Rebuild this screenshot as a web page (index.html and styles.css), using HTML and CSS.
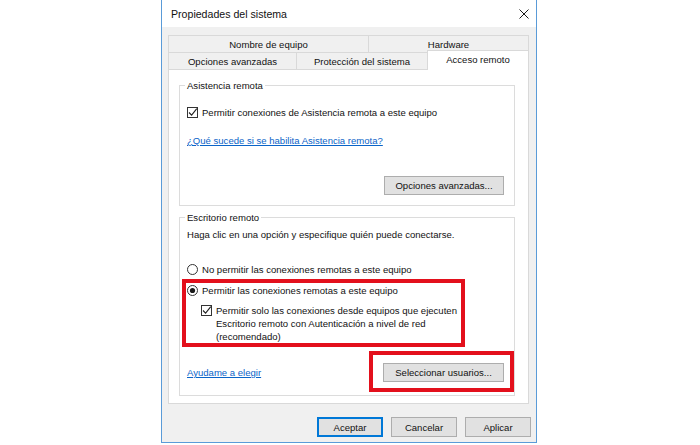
FILE: index.html
```html
<!DOCTYPE html>
<html lang="es">
<head>
<meta charset="utf-8">
<title>Propiedades del sistema</title>
<link rel="stylesheet" href="styles.css">
</head>
<body>
<div class="window">
  <div class="titlebar">
    <span class="title">Propiedades del sistema</span>
    <svg class="close" width="10" height="10" viewBox="0 0 10 10"><path d="M0.5 0.5 L9.5 9.5 M9.5 0.5 L0.5 9.5" stroke="#1a1a1a" stroke-width="1" fill="none"/></svg>
  </div>
  <div class="content">
    <div class="tabs">
      <div class="tabrow">
        <div class="tab w-nombre">Nombre de equipo</div>
        <div class="tab w-fill">Hardware</div>
      </div>
      <div class="tabrow">
        <div class="tab w-opciones">Opciones avanzadas</div>
        <div class="tab w-proteccion">Protección del sistema</div>
        <div class="tab w-fill active">Acceso remoto</div>
      </div>
    </div>
    <div class="panel">
      <fieldset class="group g1">
        <legend>Asistencia remota</legend>
        <div class="opt-row r-check1">
          <svg class="box" width="11" height="11" viewBox="0 0 11 11"><rect x="0.5" y="0.5" width="10" height="10" fill="#fff" stroke="#333"/><path d="M2 5.5 L4.6 8.2 L9.8 1.6" stroke="#222" stroke-width="1.1" fill="none"/></svg>
          <span>Permitir conexiones de Asistencia remota a este equipo</span>
        </div>
        <div class="link-row r-link1"><a class="link">¿Qué sucede si se habilita Asistencia remota?</a></div>
        <div class="btn-row r-btn1"><button class="btn btn-opc">Opciones avanzadas...</button></div>
      </fieldset>
      <fieldset class="group g2">
        <legend>Escritorio remoto</legend>
        <div class="text-row r-intro">Haga clic en una opción y especifique quién puede conectarse.</div>
        <div class="opt-row r-radio1">
          <svg class="box" width="11" height="11" viewBox="0 0 11 11"><circle cx="5.5" cy="5.5" r="5" fill="#fff" stroke="#333"/></svg>
          <span>No permitir las conexiones remotas a este equipo</span>
        </div>
        <div class="hl r-radio2">
          <div class="opt-row">
            <svg class="box" width="11" height="11" viewBox="0 0 11 11"><circle cx="5.5" cy="5.5" r="5" fill="#fff" stroke="#333"/><circle cx="5.5" cy="5.5" r="2.6" fill="#1a1a1a"/></svg>
            <span>Permitir las conexiones remotas a este equipo</span>
          </div>
          <div class="sub-check">
            <svg class="box" width="11" height="11" viewBox="0 0 11 11"><rect x="0.5" y="0.5" width="10" height="10" fill="#fff" stroke="#333"/><path d="M2 5.5 L4.6 8.2 L9.8 1.6" stroke="#222" stroke-width="1.1" fill="none"/></svg>
            <span>Permitir solo las conexiones desde equipos que ejecuten<br>Escritorio remoto con Autenticación a nivel de red<br>(recomendado)</span>
          </div>
          <div class="redbox rb1"></div>
        </div>
        <div class="bottom-row">
          <a class="link">Ayudame a elegir</a>
          <div class="hl">
            <button class="btn btn-sel">Seleccionar usuarios...</button>
            <div class="redbox rb2"></div>
          </div>
        </div>
      </fieldset>
    </div>
    <div class="footer">
      <button class="btn btn-foot default">Aceptar</button>
      <button class="btn btn-foot">Cancelar</button>
      <button class="btn btn-foot">Aplicar</button>
    </div>
  </div>
</div>
</body>
</html>
```
FILE: styles.css
```css
* { box-sizing: border-box; }
html, body { margin: 0; padding: 0; background: #fff; }
body {
  font-family: "Liberation Sans", Arial, sans-serif;
  font-size: 9.55px;
  color: #111;
}
.window {
  margin-left: 161px;
  width: 376px;
  border: 1px solid #5a9bd8;
  border-top: none;
  background: #f0f0f0;
}
.titlebar {
  height: 27px;
  background: #fff;
  display: flex;
  align-items: center;
  justify-content: space-between;
  padding: 0 7px 0 9px;
}
.title { font-size: 10.6px; color: #111; }
.close { display: block; }
.content { padding: 8px 7px 5px 6px; }
.tabrow { display: flex; height: 17px; align-items: flex-start; }
.tab {
  height: 17px;
  border: 1px solid #d9d9d9;
  border-bottom: none;
  display: flex;
  align-items: center;
  justify-content: center;
  background: #f0f0f0;
  margin-left: -1px;
  white-space: nowrap;
}
.tab:first-child { margin-left: 0; }
.w-nombre { width: 201px; }
.w-opciones { width: 129px; }
.w-proteccion { width: 132px; }
.w-fill { flex: 1; }
.tab.active {
  background: #fff;
  height: 20px;
  margin-top: -2px;
  padding-bottom: 2px;
  position: relative;
  z-index: 1;
}
.panel {
  background: #fff;
  border: 1px solid #d9d9d9;
  padding: 9px 13px 7px 10px;
}
.group {
  margin: 0;
  border: 1px solid #dcdcdc;
  padding: 0 10px 10px 7px;
  min-width: 0;
}
.group legend {
  padding: 0 2px;
  margin-left: -2px;
  line-height: 13px;
}
.g2 { margin-top: 5px; padding-bottom: 13px; }
.opt-row {
  display: flex;
  align-items: center;
  gap: 4px;
  height: 14px;
  white-space: nowrap;
}
.box { display: block; flex: none; }
.link-row, .text-row { height: 14px; line-height: 14px; white-space: nowrap; }
.link { color: #0a64c8; text-decoration: underline; text-underline-offset: 1px; }
.r-check1 { margin-top: 13px; }
.r-link1 { margin-top: 15px; }
.r-btn1 { margin-top: 28px; display: flex; justify-content: flex-end; }
.r-intro { margin-top: 4px; }
.r-radio1 { margin-top: 20px; }
.r-radio2 { margin-top: 7px; }
.hl { position: relative; }
.sub-check {
  display: flex;
  align-items: flex-start;
  gap: 4px;
  margin: 7px 0 0 14px;
  line-height: 13px;
  white-space: nowrap;
}
.sub-check .box { margin-top: 1px; }
.bottom-row {
  margin-top: 20px;
  display: flex;
  justify-content: space-between;
  align-items: center;
}
.btn {
  font: inherit;
  color: #111;
  height: 19px;
  padding: 0;
  border: 1px solid #adadad;
  background: #e1e1e1;
  display: flex;
  align-items: center;
  justify-content: center;
  white-space: nowrap;
}
.btn-opc { width: 120px; }
.btn-sel { width: 121px; }
.redbox {
  position: absolute;
  border: 4px solid #e3101c;
  pointer-events: none;
}
.rb1 { left: -5px; top: -4px; width: 283px; height: 68px; }
.rb2 { left: -14px; top: -12px; width: 145px; height: 41px; }
.footer {
  margin-top: 13px;
  margin-right: -2px;
  display: flex;
  justify-content: flex-end;
  gap: 8px;
}
.btn-foot { width: 66px; height: 20px; }
.btn-foot.default { border-color: #0078d7; box-shadow: inset 0 0 0 1px #0078d7; }
```
